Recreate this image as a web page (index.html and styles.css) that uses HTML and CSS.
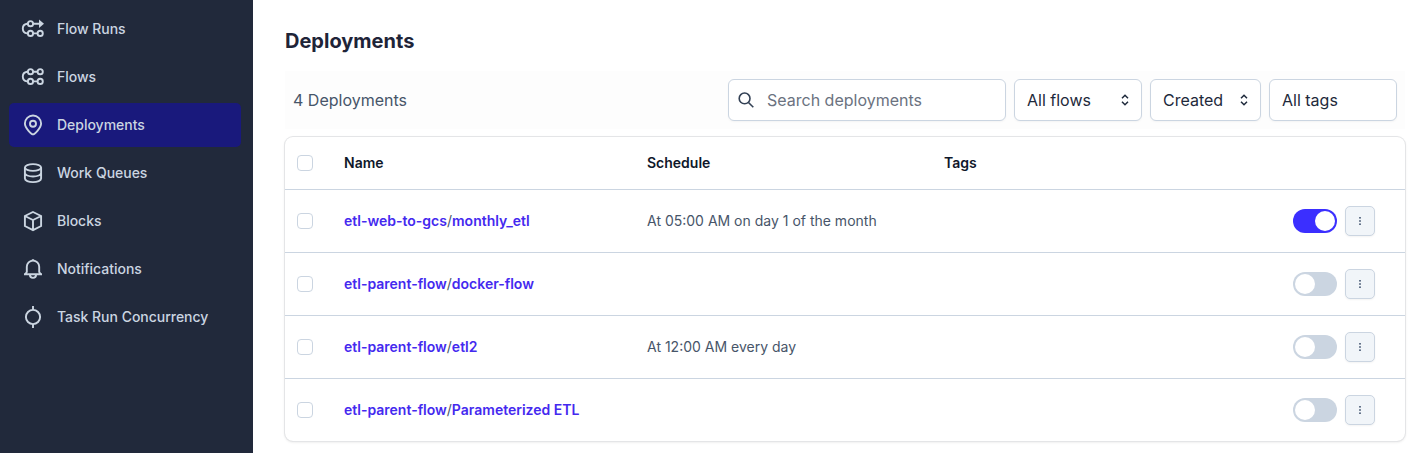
FILE: index.html
```
<!DOCTYPE html>
<html lang="en">
<head>
<meta charset="utf-8">
<title>Deployments</title>
<link rel="stylesheet" href="styles.css">
</head>
<body>
<svg class="defs" width="0" height="0">
  <symbol id="dots" viewBox="0 0 16 16"><g fill="currentColor"><rect x="7" y="4" width="2" height="1.6"/><rect x="7" y="7.2" width="2" height="1.6"/><rect x="7" y="10.4" width="2" height="1.6"/></g></symbol>
  <symbol id="updown" viewBox="0 0 8 12"><path d="M1 4.2 4 1.3l3 2.9M1 7.8l3 2.9 3-2.9" fill="none" stroke="currentColor" stroke-width="1.5"/></symbol>
</svg>
<div class="app">
  <nav class="sidebar">
    <a class="nav-item"><svg class="nav-icon" viewBox="0 0 24 24"><path d="M6.9 6.7H6a4.9 4.9 0 0 0 0 9.7h1M12 6.7h6M12 16.4h4.7"/><circle cx="9.5" cy="6.7" r="2.6"/><circle cx="9.5" cy="16.4" r="2.6"/><circle cx="19.2" cy="16.4" r="2.6"/><path class="solid" d="M18 2.4 23 6.7 18 11z"/></svg>Flow Runs</a>
    <a class="nav-item"><svg class="nav-icon" viewBox="0 0 24 24"><path d="M6.9 6.7H6a4.9 4.9 0 0 0 0 9.7h1M12 6.7h4.7M12 16.4h4.7"/><circle cx="9.5" cy="6.7" r="2.6"/><circle cx="9.5" cy="16.4" r="2.6"/><circle cx="19.2" cy="6.7" r="2.6"/><circle cx="19.2" cy="16.4" r="2.6"/></svg>Flows</a>
    <a class="nav-item active"><svg class="nav-icon" viewBox="0 0 24 24"><path d="M12 21.4c-1.1 0-8.1-6-8.1-10.8a8.1 8.1 0 0 1 16.2 0c0 4.8-7 10.8-8.1 10.8z"/><circle cx="12" cy="10.8" r="3"/></svg>Deployments</a>
    <a class="nav-item"><svg class="nav-icon" viewBox="0 0 24 24"><ellipse cx="12" cy="6.5" rx="8.1" ry="3.4"/><path d="M3.9 6.5v11.1c0 2 3.6 3.5 8.1 3.5s8.1-1.5 8.1-3.5V6.5M3.9 12c0 2 3.6 3.5 8.1 3.5s8.1-1.5 8.1-3.5"/></svg>Work Queues</a>
    <a class="nav-item"><svg class="nav-icon" viewBox="0 0 24 24"><path d="M12 3 20.1 7v10L12 21.1 3.9 17V7zM3.9 7l8.1 4 8.1-4M12 11v10"/></svg>Blocks</a>
    <a class="nav-item"><svg class="nav-icon" viewBox="0 0 24 24"><path d="M3 17.2h18M4.4 17l1.4-2V9.8a6.2 6.2 0 0 1 12.4 0V15l1.4 2M10.8 3.2h2.4M8.9 17.5c0 2.1 1.4 3.4 3.1 3.4s3.1-1.3 3.1-3.4"/></svg>Notifications</a>
    <a class="nav-item"><svg class="nav-icon" viewBox="0 0 24 24"><circle cx="12" cy="12" r="7.1"/><path d="M12 1v4M12 19v4"/></svg>Task Run Concurrency</a>
  </nav>
  <main class="page">
    <h1 class="title">Deployments</h1>
    <div class="toolbar">
      <span class="count">4 Deployments</span>
      <div class="field search"><svg class="search-icon" viewBox="0 0 18 18"><circle cx="7.6" cy="7.4" r="5.4"/><path d="m11.5 11.5 4.8 4.7"/></svg>Search deployments</div>
      <div class="field flows">All flows<svg class="updown"><use href="#updown"/></svg></div>
      <div class="field created">Created<svg class="updown"><use href="#updown"/></svg></div>
      <div class="field tags">All tags</div>
    </div>
    <section class="table">
      <div class="row head"><span class="check"></span><span>Name</span><span>Schedule</span><span>Tags</span></div>
      <div class="row"><span class="check"></span><span class="name"><a>etl-web-to-gcs</a>/<a>monthly_etl</a></span><span>At 05:00 AM on day 1 of the month</span><span></span><span class="toggle on"></span><span class="more"><svg class="dots"><use href="#dots"/></svg></span></div>
      <div class="row"><span class="check"></span><span class="name"><a>etl-parent-flow</a>/<a>docker-flow</a></span><span></span><span></span><span class="toggle"></span><span class="more"><svg class="dots"><use href="#dots"/></svg></span></div>
      <div class="row"><span class="check"></span><span class="name"><a>etl-parent-flow</a>/<a>etl2</a></span><span>At 12:00 AM every day</span><span></span><span class="toggle"></span><span class="more"><svg class="dots"><use href="#dots"/></svg></span></div>
      <div class="row"><span class="check"></span><span class="name"><a>etl-parent-flow</a>/<a>Parameterized ETL</a></span><span></span><span></span><span class="toggle"></span><span class="more"><svg class="dots"><use href="#dots"/></svg></span></div>
    </section>
  </main>
</div>
</body>
</html>
```
FILE: styles.css
```
* { box-sizing: border-box; }
body { margin: 0; font-family: Inter, sans-serif; font-size: 14px; line-height: 20px; color: #475569; background: #fff; overflow: hidden; }
.defs { position: absolute; }
.app { display: flex; height: 453px; }
.sidebar { flex: 0 0 253px; background: #21293b; padding: 7px 12px 0 9px; display: flex; flex-direction: column; gap: 4px; }
.nav-item { display: flex; align-items: center; gap: 12px; height: 44px; padding: 0 12px; border-radius: 5px; color: #cbd5e1; font-weight: 500; letter-spacing: -.02px; }
.nav-item.active { background: #19197c; }
.nav-icon { width: 24px; height: 24px; fill: none; stroke: currentColor; stroke-width: 1.9; }
.nav-icon .solid { fill: currentColor; stroke: none; }
.page { flex: 1; padding: 27px 11px 0 32px; }
.title { margin: 0 0 16px; font-size: 20px; line-height: 28px; font-weight: 700; color: #1e2438; }
.toolbar { display: flex; align-items: center; gap: 8px; height: 58px; padding: 0 8px; background: #fdfdfd; font-size: 16px; line-height: 24px; }
.count { flex: 1; }
.field { display: flex; align-items: center; justify-content: space-between; height: 42px; padding: 0 12px; border: 1px solid #cbd5e1; border-radius: 6px; background: #fff; color: #1e293b; box-shadow: 0 1px 2px rgba(0,0,0,.04); }
.search { width: 278px; justify-content: flex-start; gap: 12px; padding-left: 8px; color: #6b7280; }
.search-icon { width: 18px; height: 18px; fill: none; stroke: #334155; stroke-width: 1.6; }
.flows { width: 128px; }
.created { width: 111px; }
.tags { width: 128px; }
.updown { width: 8px; height: 12px; }
.table { margin-top: 8px; border-radius: 8px; box-shadow: 0 0 0 1px #e4e5e7, 0 1px 3px rgba(0,0,0,.12); }
.row { display: grid; grid-template-columns: 47px 303px 297px 349px 52px 30px; align-items: center; height: 63px; padding-left: 12px; border-bottom: 1px solid #cbd5e1; }
.row:last-child { height: 62px; border-bottom: 0; }
.head { height: 53px; color: #0f172a; font-weight: 600; }
.check { width: 16px; height: 16px; border: 1px solid #cbd5e1; border-radius: 4px; }
.name a { color: #4429ef; font-weight: 600; }
.toggle { width: 44px; height: 24px; padding: 2px; border-radius: 12px; background: #cbd5e1; display: flex; }
.toggle::before { content: ""; width: 20px; height: 20px; border-radius: 50%; background: #fff; }
.toggle.on { background: #3b2fff; justify-content: flex-end; }
.more { width: 30px; height: 30px; display: flex; align-items: center; justify-content: center; border: 1px solid #cbd5e1; border-radius: 5px; background: #f1f5f9; box-shadow: 0 1px 2px rgba(0,0,0,.05); }
.dots { width: 16px; height: 16px; color: #64748b; }
```
